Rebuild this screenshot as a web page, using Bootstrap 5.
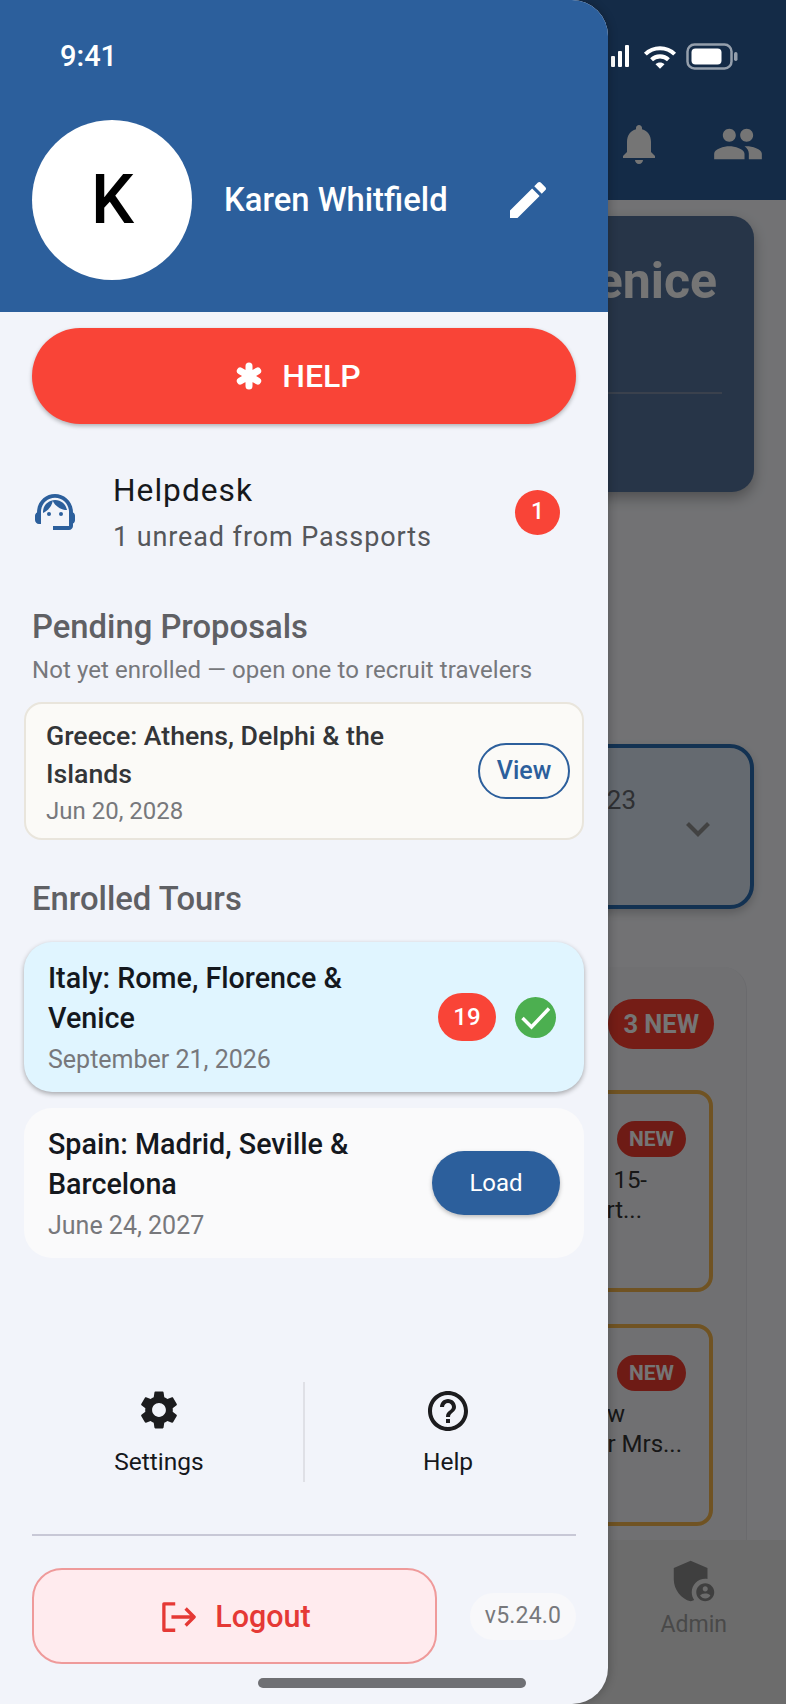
<!DOCTYPE html>
<html lang="en">
<head>
    <meta charset="UTF-8">
    <meta name="viewport" content="width=device-width, initial-scale=1.0">
    <title>Tour drawer</title>
    <link href="https://cdn.jsdelivr.net/npm/bootstrap@5.3.0/dist/css/bootstrap.min.css" rel="stylesheet">
    <style>
        html, body { margin: 0; width: 786px; height: 1704px; overflow: hidden; }
        body { position: relative; font-family: Roboto, "Liberation Sans", sans-serif; background: #f8f9fd; }

        /* page under the drawer */
        .under { height: 1704px; }
        .under-top { height: 200px; background: #2c5f9c; color: #fff; padding-right: 48px; }
        .under-status { position: relative; z-index: 1; height: 113px; padding-top: 43px; gap: 9px; }
        .under-status svg { flex-shrink: 0; }
        .status-bars, .status-wifi { margin-top: 1px; }
        .status-wifi { margin-left: 5px; }
        .under-icons { gap: 49px; margin: 5px -26px 0 0; }
        .under-main { height: 1340px; padding-top: 16px; }
        .hero-panel { height: 276px; margin: 0 32px 252px 0; padding: 36px 37px 0 0; border-radius: 22px; background: #55749e; box-shadow: 0 6px 14px rgba(0,0,0,.3); }
        .hero-title { font-size: 50px; font-weight: 700; line-height: 58px; color: #fff; white-space: nowrap; }
        .hero-rule { height: 2px; margin: 82px -5px 0 0; background: #7f8ea8; }
        .pick-box { height: 165px; margin: 0 32px 58px 0; border: 4px solid #2a6db4; border-radius: 24px; background: #dde8f4; padding: 37px 34px 0 0; color: #666a70; box-shadow: 0 4px 10px rgba(0,0,0,.2); }
        .pick-num { font-size: 26px; line-height: 30px; }
        .pick-box svg { margin: 25px 0 0 44px; }
        .news-box { height: 573px; margin-right: 39px; padding: 32px 33px 0 0; background: #f4f5f9; border-right: 1px solid #e8e8ee; border-radius: 0 24px 0 0; }
        .pill-new { background: #ff4030; color: #fff; font-weight: 700; font-size: 25.500px; line-height: 50px; height: 50px; border-radius: 25px; padding: 0 15px; margin-right: -1px; }
        .pill-tag { background: #ef3b2f; color: #fff; font-weight: 700; font-size: 21px; line-height: 36px; height: 36px; border-radius: 18px; padding: 0 12px; margin-right: 23px; }
        .news-item { height: 202px; border: 4px solid #f3b64c; border-radius: 16px; padding: 27px 0 0 0; margin-top: 41px; color: #333; font-size: 24px; line-height: 30px; }
        .news-item + .news-item { margin-top: 32px; }
        .news-text { padding-top: 8px; white-space: nowrap; }
        .news-text div { text-align: right; }
        .line-a { padding-right: 62px; }
        .line-b { padding-right: 67px; }
        .line-c { padding-right: 84px; }
        .line-d { padding-right: 27px; }
        .under-nav { height: 164px; background: #ececec; color: #a0a0a0; font-size: 23px; padding: 14px 59px 0 0; }
        .scrim { position: absolute; inset: 0; background: rgba(0,0,0,.54); }

        /* drawer */
        .side { position: absolute; z-index: 2; left: 0; top: 0; width: 608px; height: 1704px; background: #f2f4fa; border-radius: 0 36px 36px 0; overflow: hidden; box-shadow: 2px 0 8px rgba(0,0,0,.2); }
        .side-head { height: 312px; background: #2c5f9c; color: #fff; padding: 38px 56px 0 32px; }
        .clock { font-size: 29px; font-weight: 500; line-height: 36px; padding-left: 28px; margin-bottom: 46px; }
        .face { width: 160px; height: 160px; background: #fff; color: #000; font-size: 68px; font-weight: 500; line-height: 1; padding-left: 1px; }
        .who { font-size: 32.800px; font-weight: 500; margin: 2px 0 0 32px; }
        .sos { height: 96px; margin: 16px 32px 0; padding-right: 24px; background: #f94437; color: #fff; border: 0; border-radius: 48px; font-size: 32px; font-weight: 500; gap: 19px; box-shadow: 0 2px 4px rgba(0,0,0,.28); }
        .sos:hover { background: #f94437; color: #fff; }
        .desk { margin: 42px 48px 0 31px; height: 92px; }
        .desk-text { margin-left: 34px; padding-top: 4px; }
        .desk-name { font-size: 31.700px; line-height: 46px; letter-spacing: 1px; color: #16181c; }
        .desk-sub { font-size: 27px; line-height: 46px; letter-spacing: .9px; color: #55575b; }
        .dot-red { background: #f94437; color: #fff; font-weight: 500; }
        .desk-dot { width: 45px; height: 45px; font-size: 23px; }
        .sec-title { font-size: 32.800px; font-weight: 500; line-height: 40px; color: #5f6064; margin: 0 0 0 32px; }
        .title-pending { margin-top: 49px; }
        .title-enrolled { margin-top: 39px; margin-bottom: 23px; }
        .sec-note { font-size: 24px; line-height: 34px; letter-spacing: .08px; color: #77787c; margin: 6px 0 0 32px; }
        .prop { height: 138px; margin: 15px 24px 0; background: #fbfaf7; border: 2px solid #e9e5dc; border-radius: 18px; padding: 0 12px 0 20px; }
        .prop-name { font-size: 26.700px; font-weight: 500; line-height: 38px; color: #333538; }
        .prop-date { font-size: 24px; line-height: 30px; color: #77787c; margin-top: 3px; }
        .prop-view { width: 92px; height: 56px; padding: 0; border: 2px solid #2c5f9c; border-radius: 28px; color: #2c5f9c; font-size: 25px; font-weight: 500; background: transparent; }
        .tour { height: 150px; margin: 0 24px; border-radius: 28px; padding: 0 24px; }
        .tour-info { padding-bottom: 2px; }
        .tour-on { background: #e0f5ff; box-shadow: 0 2px 5px rgba(0,0,0,.32); }
        .tour-off { background: #fafafb; margin-top: 16px; }
        .tour-name { font-size: 28.700px; font-weight: 500; line-height: 40px; color: #14181e; }
        .tour-date { font-size: 25px; line-height: 30px; color: #77787c; margin-top: 7px; }
        .count { width: 58px; height: 48px; border-radius: 24px; font-size: 24px; }
        .tour-tick { margin: 0 4px 0 19px; }
        .tour-load { width: 128px; height: 64px; padding: 0; border: 0; border-radius: 32px; background: #2c5f9c; color: #fff; font-size: 24px; box-shadow: 0 2px 4px rgba(0,0,0,.25); }
        .tools { margin: 124px 17px 0 15px; height: 100px; }
        .tool { width: 288px; padding-top: 5px; color: #16181c; font-size: 24.500px; line-height: 30px; }
        .tool-gear svg { margin-bottom: 14px; }
        .tool-ask svg { margin-bottom: 12px; }
        .tool + .tool { border-left: 2px solid #dfe0e6; }
        .side-rule { height: 2px; margin: 52px 32px 0; background: #c8c8d6; }
        .foot { margin: 32px 32px 0; }
        .out { width: 405px; height: 96px; padding: 2px 0 0 4px; background: #ffebee; border: 2px solid #ef9a9a; border-radius: 30px; color: #e53935; font-size: 30.500px; font-weight: 500; gap: 19px; }
        .out:hover { background: #ffebee; color: #e53935; border-color: #ef9a9a; }
        .ver { width: 106px; height: 47px; border-radius: 24px; background: #f8f8fa; color: #77787c; font-size: 23px; letter-spacing: .2px; }
        .home-bar { position: absolute; left: 258px; top: 1678px; width: 268px; height: 10px; border-radius: 5px; background: #6f7074; }
    </style>
</head>
<body>
    <!-- page behind the drawer -->
    <div class="under">
        <div class="under-top">
            <div class="under-status d-flex justify-content-end align-items-start">
                <svg class="status-bars" width="25" height="24" viewBox="0 0 25 24" fill="#fff"><rect x="0" y="16" width="4" height="7" rx="1"/><rect x="7" y="12" width="4" height="11" rx="1"/><rect x="14" y="7" width="4" height="16" rx="1"/><rect x="21" y="1" width="4" height="22" rx="1"/></svg>
                <svg class="status-wifi" width="34" height="27" viewBox="0 0 30 24" fill="none" stroke="#fff" stroke-width="3.600"><path d="M2 9c7-7 19-7 26 0"/><path d="M7.500 14c4-4 11-4 15 0"/><path d="M15 22l-4-4c2-2 6-2 8 0z" fill="#fff" stroke="none"/></svg>
                <svg width="52" height="27" viewBox="0 0 52 27" fill="none"><rect x="1.500" y="1.500" width="44" height="24" rx="7" stroke="#fff" stroke-opacity=".55" stroke-width="2.500"/><rect x="5.500" y="5.500" width="30" height="16" rx="4" fill="#fff"/><rect x="48" y="9" width="3.500" height="9" rx="1.700" fill="#fff" fill-opacity=".55"/></svg>
            </div>
            <div class="under-icons d-flex justify-content-end align-items-center">
                <svg width="48" height="48" viewBox="0 0 24 24" fill="#fff"><path d="M12 22c1.100 0 2-.9 2-2h-4c0 1.100.9 2 2 2zm6-6v-5c0-3.070-1.630-5.640-4.500-6.320V4c0-.83-.67-1.500-1.500-1.500s-1.500.67-1.500 1.500v.68C7.640 5.360 6 7.920 6 11v5l-2 2v1h16v-1l-2-2z"/></svg>
                <svg width="52" height="52" viewBox="0 0 24 24" fill="#fff"><path d="M16 11c1.660 0 2.990-1.340 2.990-3S17.660 5 16 5c-1.660 0-3 1.340-3 3s1.340 3 3 3zm-8 0c1.660 0 2.990-1.340 2.990-3S9.660 5 8 5C6.340 5 5 6.340 5 8s1.340 3 3 3zm0 2c-2.330 0-7 1.170-7 3.500V19h14v-2.500c0-2.330-4.670-3.500-7-3.500zm8 0c-.29 0-.62.02-.97.05 1.160.84 1.970 1.970 1.970 3.450V19h6v-2.500c0-2.330-4.670-3.500-7-3.500z"/></svg>
            </div>
        </div>
        <div class="under-main">
            <div class="hero-panel">
                <div class="hero-title text-end">Italy: Rome, Florence &amp; Venice</div>
                <div class="hero-rule"></div>
            </div>
            <div class="pick-box d-flex justify-content-end align-items-start">
                <div class="pick-num">23</div>
                <svg width="36" height="36" viewBox="0 0 24 24" fill="none" stroke="#909090" stroke-width="2.800"><path d="M5 9l7 7 7-7"/></svg>
            </div>
            <div class="news-box">
                <div class="d-flex justify-content-end"><span class="pill-new">3 NEW</span></div>
                <div class="news-item">
                    <div class="d-flex justify-content-end"><span class="pill-tag">NEW</span></div>
                    <div class="news-text">
                        <div class="line-a">15-</div>
                        <div class="line-b">rt...</div>
                    </div>
                </div>
                <div class="news-item">
                    <div class="d-flex justify-content-end"><span class="pill-tag">NEW</span></div>
                    <div class="news-text">
                        <div class="line-c">ew</div>
                        <div class="line-d">r Mrs...</div>
                    </div>
                </div>
            </div>
        </div>
        <div class="under-nav d-flex justify-content-end">
            <div class="text-center">
                <svg width="54" height="54" viewBox="0 0 24 24" fill="#8a8a8a"><path d="M17 11c.34 0 .67.04 1 .09V6.270L10.500 3 3 6.270v4.910c0 4.540 3.200 8.790 7.500 9.820.55-.13 1.080-.32 1.600-.55-.69-.98-1.100-2.170-1.100-3.450 0-3.310 2.690-6 6-6z"/><path d="M17 13c-2.210 0-4 1.790-4 4s1.790 4 4 4 4-1.790 4-4-1.790-4-4-4zm0 1.380c.62 0 1.120.51 1.120 1.120s-.51 1.120-1.120 1.120-1.120-.51-1.120-1.120.5-1.120 1.120-1.120zm0 5.370c-.93 0-1.740-.46-2.240-1.170.05-.72 1.510-1.080 2.240-1.080s2.190.36 2.240 1.080c-.5.71-1.310 1.170-2.240 1.170z"/></svg>
                <div>Admin</div>
            </div>
        </div>
    </div>
    <div class="scrim"></div>

    <!-- drawer -->
    <div class="side d-flex flex-column">
        <div class="side-head">
            <div class="clock">9:41</div>
            <div class="d-flex align-items-center">
                <div class="face rounded-circle d-flex align-items-center justify-content-center flex-shrink-0">K</div>
                <div class="who flex-grow-1">Karen Whitfield</div>
                <svg width="48" height="48" viewBox="0 0 24 24" fill="#fff"><path d="M3 17.250V21h3.750L17.810 9.940l-3.750-3.750L3 17.250zM20.710 7.040c.39-.39.39-1.020 0-1.410l-2.340-2.340c-.39-.39-1.020-.39-1.410 0l-1.830 1.830 3.750 3.750 1.830-1.830z"/></svg>
            </div>
        </div>

        <button class="sos btn d-flex align-items-center justify-content-center" type="button">
            <svg width="28" height="28" viewBox="0 0 28 28" stroke="#fff" stroke-width="7" stroke-linecap="round"><path d="M14 4v20M5.300 9l17.400 10M22.700 9L5.300 19"/></svg>
            <span>HELP</span>
        </button>

        <div class="desk d-flex align-items-center">
            <svg width="48" height="48" viewBox="0 0 24 24" fill="#2c5f9c" class="flex-shrink-0"><path d="M21 12.220C21 6.730 16.740 3 12 3c-4.690 0-9 3.650-9 9.280-.6.34-1 .98-1 1.720v2c0 1.100.9 2 2 2h1v-6.100c0-3.870 3.130-7 7-7s7 3.130 7 7V19h-8v2h8c1.100 0 2-.9 2-2v-1.220c.59-.31 1-.92 1-1.640v-2.300c0-.7-.41-1.310-1-1.620z"/><circle cx="9" cy="13" r="1"/><circle cx="15" cy="13" r="1"/><path d="M18 11.030C17.520 8.180 15.040 6 12.050 6c-3.030 0-6.290 2.510-6.030 6.450 2.470-1.010 4.330-3.210 4.860-5.890 1.310 2.630 4 4.440 7.120 4.470z"/></svg>
            <div class="desk-text flex-grow-1">
                <div class="desk-name">Helpdesk</div>
                <div class="desk-sub">1 unread from Passports</div>
            </div>
            <div class="desk-dot dot-red rounded-circle d-flex align-items-center justify-content-center">1</div>
        </div>

        <h2 class="sec-title title-pending">Pending Proposals</h2>
        <div class="sec-note">Not yet enrolled — open one to recruit travelers</div>
        <div class="prop d-flex align-items-center">
            <div class="flex-grow-1">
                <div class="prop-name">Greece: Athens, Delphi &amp; the<br>Islands</div>
                <div class="prop-date">Jun 20, 2028</div>
            </div>
            <button class="prop-view btn" type="button">View</button>
        </div>

        <h2 class="sec-title title-enrolled">Enrolled Tours</h2>
        <div class="tour tour-on d-flex align-items-center">
            <div class="tour-info flex-grow-1">
                <div class="tour-name">Italy: Rome, Florence &amp;<br>Venice</div>
                <div class="tour-date">September 21, 2026</div>
            </div>
            <div class="count dot-red d-flex align-items-center justify-content-center">19</div>
            <svg class="tour-tick" width="41" height="41" viewBox="0 0 41 41"><circle cx="20.500" cy="20.500" r="20.500" fill="#4caf50"/><path d="M7.500 21l9 9L34 11.500" fill="none" stroke="#fff" stroke-width="3.500"/></svg>
        </div>
        <div class="tour tour-off d-flex align-items-center">
            <div class="tour-info flex-grow-1">
                <div class="tour-name">Spain: Madrid, Seville &amp;<br>Barcelona</div>
                <div class="tour-date">June 24, 2027</div>
            </div>
            <button class="tour-load btn" type="button">Load</button>
        </div>

        <div class="tools d-flex">
            <div class="tool tool-gear text-center">
                <svg class="d-block mx-auto" width="46" height="46" viewBox="0 0 24 24" fill="#1c1c1e"><path d="M19.140 12.940c.04-.3.06-.61.06-.94 0-.32-.02-.64-.07-.94l2.030-1.580c.18-.14.23-.41.12-.61l-1.920-3.320c-.12-.22-.37-.29-.59-.22l-2.390.96c-.5-.38-1.030-.7-1.620-.94l-.36-2.540c-.04-.24-.24-.41-.48-.41h-3.840c-.24 0-.43.17-.47.41l-.36 2.540c-.59.24-1.130.57-1.620.94l-2.390-.96c-.22-.08-.47 0-.59.22L2.740 8.870c-.12.21-.08.47.12.61l2.030 1.580c-.05.3-.09.63-.09.94s.02.64.07.94l-2.030 1.580c-.18.14-.23.41-.12.61l1.920 3.320c.12.22.37.29.59.22l2.390-.96c.5.38 1.030.7 1.620.94l.36 2.540c.05.24.24.41.48.41h3.840c.24 0 .44-.17.47-.41l.36-2.540c.59-.24 1.130-.56 1.620-.94l2.390.96c.22.08.47 0 .59-.22l1.920-3.320c.12-.22.07-.47-.12-.61l-2.010-1.580zM12 15.600c-1.980 0-3.600-1.620-3.600-3.600s1.620-3.600 3.600-3.600 3.600 1.620 3.600 3.600-1.620 3.600-3.600 3.600z"/></svg>
                Settings
            </div>
            <div class="tool tool-ask text-center">
                <svg class="d-block mx-auto" width="48" height="48" viewBox="0 0 24 24" fill="#1c1c1e"><path d="M11 18h2v-2h-2v2zm1-16C6.480 2 2 6.480 2 12s4.480 10 10 10 10-4.480 10-10S17.520 2 12 2zm0 18c-4.410 0-8-3.590-8-8s3.590-8 8-8 8 3.590 8 8-3.590 8-8 8zm0-14c-2.210 0-4 1.790-4 4h2c0-1.100.9-2 2-2s2 .9 2 2c0 2-3 1.750-3 5h2c0-2.250 3-2.500 3-5 0-2.210-1.790-4-4-4z"/></svg>
                Help
            </div>
        </div>
        <div class="side-rule"></div>

        <div class="foot d-flex align-items-center justify-content-between">
            <button class="out btn d-flex align-items-center justify-content-center" type="button">
                <svg width="34" height="32" viewBox="0 0 36 32" fill="none" stroke="#e53935" stroke-width="3.500" stroke-linejoin="round"><path d="M14 2H2v28h12"/><path d="M10 16h24M25 7l9 9-9 9"/></svg>
                <span>Logout</span>
            </button>
            <div class="ver d-flex align-items-center justify-content-center">v5.24.0</div>
        </div>
        <div class="home-bar"></div>
    </div>

    <script src="https://cdn.jsdelivr.net/npm/bootstrap@5.3.0/dist/js/bootstrap.bundle.min.js"></script>
</body>
</html>
